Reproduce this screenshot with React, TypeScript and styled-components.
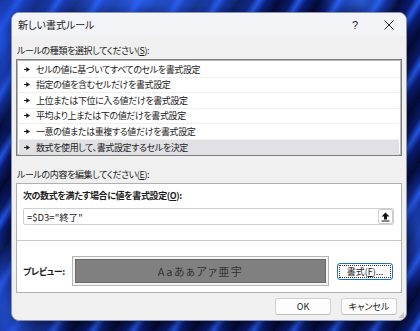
import React from "react";
import styled, { createGlobalStyle } from "styled-components";

const GlobalStyle = createGlobalStyle`
  html, body {
    margin: 0;
    padding: 0;
  }
  body {
    font-family: "Noto Sans CJK JP", "Noto Sans", sans-serif;
    font-feature-settings: "palt";
    color: #1b1b1b;
  }
`;

const rules = [
  "セルの値に基づいてすべてのセルを書式設定",
  "指定の値を含むセルだけを書式設定",
  "上位または下位に入る値だけを書式設定",
  "平均より上または下の値だけを書式設定",
  "一意の値または重複する値だけを書式設定",
  "数式を使用して、書式設定するセルを決定",
];

const RuleArrow = () => (
  <svg width="6" height="5" viewBox="0 0 6 5">
    <path d="M0 2.5 H3" stroke="#1b1b1b" strokeWidth="1.2" />
    <path d="M2.3 0 L6 2.5 L2.3 5 Z" fill="#1b1b1b" />
  </svg>
);

const UpIcon = () => (
  <svg width="9" height="10" viewBox="0 0 9 10">
    <path d="M4.5 0.5 L8.5 4.5 H6 V7.5 H3 V4.5 H0.5 Z" fill="#111" />
    <path d="M0.5 9 H8.5" stroke="#111" strokeWidth="1.2" />
  </svg>
);

const CloseIcon = () => (
  <svg width="10" height="10" viewBox="0 0 10 10">
    <path d="M0.5 0.5 L9.5 9.5 M9.5 0.5 L0.5 9.5" stroke="#222" strokeWidth="1" />
  </svg>
);

export default function App() {
  return (
    <>
      <GlobalStyle />
      <Page>
        <Dialog>
          <TitleBar>
            <Title>新しい書式ルール</Title>
            <HelpButton>?</HelpButton>
            <CloseButton>
              <CloseIcon />
            </CloseButton>
          </TitleBar>
          <Body>
            <Label>
              ルールの種類を選択してください(<U>S</U>):
            </Label>
            <RuleList>
              {rules.map((r, i) => (
                <RuleRow key={r} $selected={i === rules.length - 1} $last={i === rules.length - 1}>
                  <RuleArrow />
                  <span>{r}</span>
                </RuleRow>
              ))}
            </RuleList>
            <Label $top={12}>
              ルールの内容を編集してください(<U>E</U>):
            </Label>
            <EditGroup>
              <FormulaSection>
                <BoldLabel>
                  次の数式を満たす場合に値を書式設定(<U>O</U>):
                </BoldLabel>
                <FormulaInput>
                  <FormulaText>=$D3="終了"</FormulaText>
                  <CollapseButton>
                    <UpIcon />
                  </CollapseButton>
                </FormulaInput>
              </FormulaSection>
              <PreviewRow>
                <PreviewLabel>プレビュー:</PreviewLabel>
                <PreviewBox>Aaあぁアァ亜宇</PreviewBox>
                <FormatButton>
                  <FocusRing>
                    書式(<U>F</U>)...
                  </FocusRing>
                </FormatButton>
              </PreviewRow>
            </EditGroup>
            <Footer>
              <DialogButton>OK</DialogButton>
              <DialogButton>キャンセル</DialogButton>
            </Footer>
          </Body>
          <Grip />
        </Dialog>
      </Page>
    </>
  );
}

const Page = styled.div`
  width: 420px;
  height: 331px;
  box-sizing: border-box;
  padding: 12px 13px 10px 11px;
  overflow: hidden;
  background:
    radial-gradient(ellipse 70px 90px at 0px 40px, rgba(35, 85, 235, 0.95), transparent),
    radial-gradient(ellipse 140px 40px at 140px 0px, rgba(45, 100, 245, 0.85), transparent),
    radial-gradient(ellipse 40px 30px at 360px 0px, rgba(50, 110, 250, 0.8), transparent),
    radial-gradient(ellipse 60px 80px at 10px 310px, rgba(40, 90, 235, 0.9), transparent),
    radial-gradient(ellipse 30px 60px at 420px 230px, rgba(40, 90, 235, 0.7), transparent),
    repeating-linear-gradient(
      122deg,
      #060f40 0px,
      #0a1c70 10px,
      #2456e6 16px,
      #0b1e78 22px,
      #040a30 34px
    );
`;

const Dialog = styled.div`
  position: relative;
  width: 396px;
  height: 309px;
  box-sizing: border-box;
  background: #f0f0f0;
  border: 1px solid #8d93a8;
  border-radius: 8px;
  overflow: hidden;
  box-shadow: 0 4px 14px rgba(0, 0, 0, 0.45);
  display: flex;
  flex-direction: column;
`;

const TitleBar = styled.div`
  height: 23px;
  flex: none;
  display: flex;
  align-items: center;
  padding-left: 6px;
  background: #f3f4f8;
`;

const Title = styled.div`
  font-size: 10px;
  color: #1b1b1b;
  flex: 1;
`;

const HelpButton = styled.div`
  width: 20px;
  text-align: center;
  font-size: 11px;
  font-family: "Liberation Sans", sans-serif;
  color: #222;
  margin-right: 13px;
`;

const CloseButton = styled.div`
  width: 22px;
  display: flex;
  justify-content: center;
  margin-right: 6px;
`;

const Body = styled.div`
  flex: 1;
  display: flex;
  flex-direction: column;
  padding: 0 4px 0 4px;
  font-size: 9px;
  letter-spacing: -0.4px;
`;

const Label = styled.div<{ $top?: number }>`
  line-height: 14px;
  margin-top: ${(p) => p.$top ?? 8}px;
  margin-bottom: 1px;
  padding-left: 1px;
`;

const U = styled.span`
  text-decoration: underline;
  text-underline-offset: 1px;
`;

const RuleList = styled.div`
  height: 97px;
  box-sizing: border-box;
  background: #fff;
  border: 1px solid #7d7d7d;
  box-shadow: inset 0 0 0 1px #b9b9b9;
  padding: 2px 2px 0 2px;
  overflow: hidden;
`;

const RuleRow = styled.div<{ $selected?: boolean; $last?: boolean }>`
  height: 15.5px;
  box-sizing: border-box;
  display: flex;
  align-items: center;
  gap: 6px;
  padding-left: 5px;
  background: ${(p) => (p.$selected ? "#e0e0e5" : "#fff")};
  border-bottom: ${(p) => (p.$last ? "none" : "1px solid #efefef")};
`;

const EditGroup = styled.div`
  height: 110px;
  box-sizing: border-box;
  background: #fff;
  border: 1px solid #b0b0b0;
  display: flex;
  flex-direction: column;
`;

const FormulaSection = styled.div`
  display: flex;
  flex-direction: column;
  padding: 5px 7px 0 6px;
  height: 57px;
  box-sizing: border-box;
  border-bottom: 1px solid #c9c9c9;
`;

const BoldLabel = styled.div`
  font-weight: 700;
  line-height: 14px;
`;

const FormulaInput = styled.div`
  margin-top: 5px;
  height: 17px;
  box-sizing: border-box;
  border: 1px solid #cfcfcf;
  border-radius: 2px;
  display: flex;
  align-items: center;
  padding-left: 3px;
`;

const FormulaText = styled.div`
  flex: 1;
  font-size: 9.5px;
  letter-spacing: 0;
`;

const CollapseButton = styled.div`
  width: 15px;
  height: 15px;
  box-sizing: border-box;
  border: 1px solid #cdcdcd;
  border-radius: 2px;
  display: flex;
  align-items: center;
  justify-content: center;
`;

const PreviewRow = styled.div`
  flex: 1;
  display: flex;
  align-items: center;
  padding: 9px 8px 0 6px;
`;

const PreviewLabel = styled.div`
  font-weight: 700;
  width: 49px;
  flex: none;
  white-space: nowrap;
`;

const PreviewBox = styled.div`
  width: 257px;
  height: 30px;
  box-sizing: border-box;
  border: 1px solid #b4b4b4;
  box-shadow: inset 0 0 0 2px #f4f4f4, inset 0 0 0 3px #6a6a6a;
  background: #808080;
  color: #333;
  font-size: 11px;
  letter-spacing: 1.4px;
  display: flex;
  align-items: center;
  justify-content: center;
`;

const FormatButton = styled.div`
  margin-left: 8px;
  width: 56px;
  height: 17px;
  box-sizing: border-box;
  border: 1px solid #1a73d1;
  border-radius: 3px;
  background: #fdfdfd;
  padding: 1px;
  display: flex;
`;

const FocusRing = styled.div`
  flex: 1;
  border: 1px dotted #333;
  display: flex;
  align-items: center;
  justify-content: center;
  letter-spacing: 0;
`;

const Footer = styled.div`
  display: flex;
  justify-content: flex-end;
  gap: 10px;
  padding: 5px 5px 0 0;
`;

const DialogButton = styled.div`
  width: 56px;
  height: 17px;
  box-sizing: border-box;
  border: 1px solid #d2d2d2;
  border-bottom-color: #bdbdbd;
  border-radius: 3px;
  background: #fdfdfd;
  letter-spacing: 0;
  display: flex;
  align-items: center;
  justify-content: center;
`;

const Grip = styled.div`
  position: absolute;
  right: 2px;
  bottom: 2px;
  width: 6px;
  height: 6px;
  background: radial-gradient(circle, #9a9a9a 0.6px, transparent 0.8px) 0 0 / 2px 2px;
  clip-path: polygon(100% 0, 100% 100%, 0 100%);
`;
